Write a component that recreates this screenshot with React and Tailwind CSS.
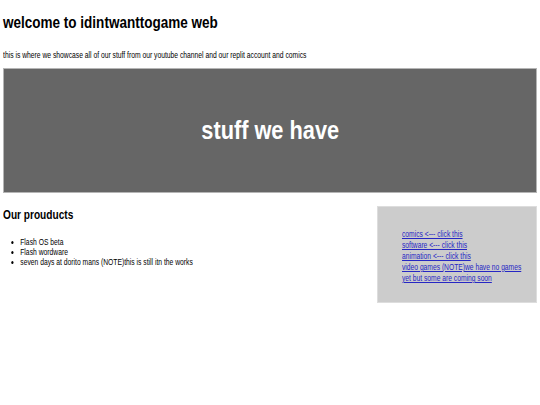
import React from 'react';

const products = ['Flash OS beta', 'Flash wordware', 'seven days at dorito mans (NOTE)this is still itn the works'];

const App = () => {
    return (
        <div className="min-h-[405px] bg-white px-[3px] text-black" style={{ fontFamily: '"Liberation Sans", Arial, sans-serif' }}>
            <h1 className="origin-left scale-x-[0.795] pt-[13px] text-[17px] font-bold leading-[20px]">welcome to idintwanttogame web</h1>
            <p className="mt-[16px] origin-left scale-x-[0.75] whitespace-nowrap text-[9px] leading-[12px]">
                this is where we showcase all of our stuff from our youtube channel and our replit account and comics
            </p>

            <div className="mt-[7px] flex h-[125px] items-center justify-center border border-[#b5b5b5] bg-[#666666]">
                <h2 className="scale-x-[0.87] text-[25px] font-bold text-white">stuff we have</h2>
            </div>

            <div className="mt-[13px] flex justify-between">
                <div className="pt-px">
                    <h3 className="origin-left scale-x-[0.75] text-[13.5px] font-bold leading-[16px]">Our prouducts</h3>
                    <ul className="mt-[14px] origin-left scale-x-[0.75] list-disc whitespace-nowrap pl-[23px] text-[9px] leading-[10px]">
                        {products.map(item => (
                            <li key={item}>{item}</li>
                        ))}
                    </ul>
                </div>
                <div className="h-[97px] w-[160px] border border-[#dddddd] bg-[#cccccc] pl-[24px] pt-[22px]">
                    <div className="w-[162px] origin-left scale-x-[0.745] text-[9px] leading-[11px]">
                        <a href="#" className="block text-[#2626c4] underline">comics &lt;--- click this</a>
                        <a href="#" className="block text-[#2626c4] underline">software &lt;--- click this</a>
                        <a href="#" className="block text-[#2626c4] underline">animation &lt;--- click this</a>
                        <a href="#" className="block text-[#2626c4] underline">video games (NOTE)we have no games yet but some are coming soon</a>
                    </div>
                </div>
            </div>
        </div>
    );
};

export default App;
